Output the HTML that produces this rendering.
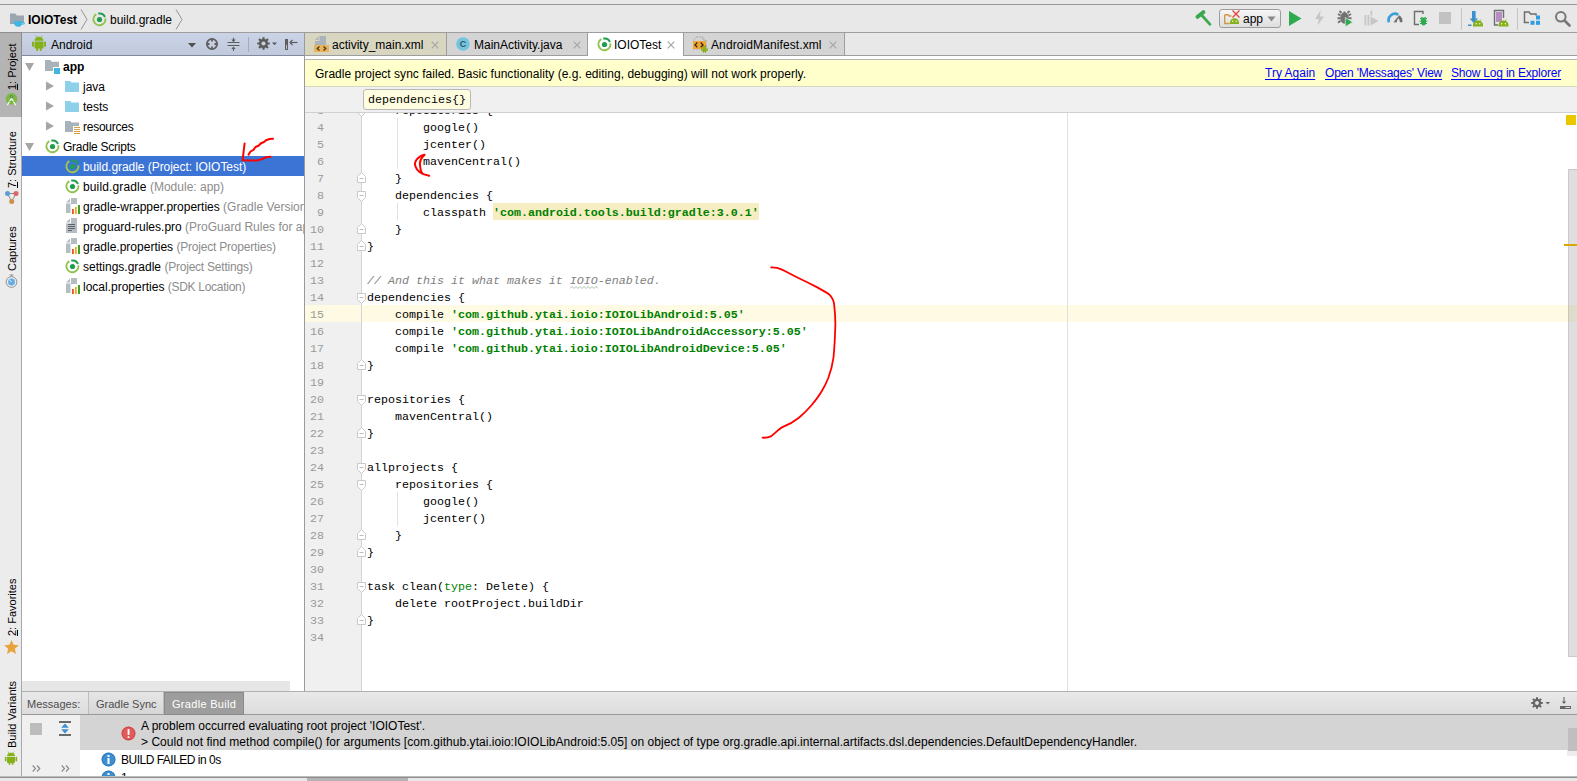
<!DOCTYPE html>
<html><head><meta charset="utf-8"><title>IOIOTest</title>
<style>
*{box-sizing:border-box}
html,body{margin:0;padding:0}
body{width:1577px;height:781px;overflow:hidden;position:relative;background:#ececec;font-family:"Liberation Sans",sans-serif;font-size:12px;color:#000}
.abs{position:absolute}
.t{position:absolute;white-space:nowrap;line-height:14px;height:14px}
.g{color:#8c8c8c}
/* nav */
#topstrip{left:0;top:0;width:1577px;height:4px;background:#e8e8e8}
#topline{left:0;top:4px;width:1577px;height:1px;background:#9a9a9a}
#nav{left:0;top:5px;width:1577px;height:27px;background:#e8e8e8}
#navline{left:0;top:32px;width:1577px;height:1px;background:#9d9d9d}
/* left strip */
#lstrip{left:0;top:33px;width:22px;height:748px;background:#ececec;border-right:1px solid #a8a8a8}
#lsel{left:0;top:32px;width:22px;height:85px;background:#b4b4b4;border-top:1px solid #8f8f8f;border-right:1px solid #8c8c8c}
.vt{position:absolute;white-space:nowrap;transform-origin:0 0;transform:rotate(-90deg);line-height:14px;height:14px;font-size:11px}
/* project panel */
#phead{left:22px;top:33px;width:283px;height:23px;background:linear-gradient(#cbd4e6,#c0c9dd);border-bottom:1px solid #808a9c}
#ptree{left:22px;top:56px;width:283px;height:635px;background:#fff}
#psel{left:22px;top:156px;width:283px;height:20px;background:#3b74d4}
#pdiv{left:304px;top:33px;width:1px;height:658px;background:#9a9a9a}
#phs{left:22px;top:681px;width:268px;height:10px;background:#e6e6e6}
.row{position:absolute;left:0;height:20px;white-space:nowrap;line-height:20px}
/* editor */
#tabs{left:305px;top:33px;width:1272px;height:23px;background:#e8e8e8;border-bottom:1px solid #9d9d9d}
.tab{position:absolute;top:33px;height:23px;border-right:1px solid #a0a0a0;border-bottom:1px solid #a8a8a8;background:#d3d3d3}
#tabgap{left:305px;top:56px;width:1272px;height:4px;background:#fff;border-bottom:1px solid #b4b4b4}
#banner{left:305px;top:60px;width:1272px;height:27px;background:#ffffcc;border-bottom:1px solid #d8d8c0}
#crumbs{left:305px;top:87px;width:1272px;height:26px;background:#f0f0f0;border-bottom:1px solid #d0d0d0}
#crumb{left:363px;top:89px;width:108px;height:21px;background:#fffde0;border:1px solid #b8b8b8;border-radius:3px}
#editor{left:305px;top:113px;width:1272px;height:578px;background:#fff;overflow:hidden}
#gutter{left:0;top:0;width:56px;height:578px;background:#f0f0f0}
#curline{left:0;top:192px;width:1272px;height:17px;background:#fffae3}
#margin{left:762px;top:0;width:1px;height:578px;background:#e0e0e0}
#vscroll{left:1262px;top:0;width:10px;height:578px;background:rgba(255,255,255,0)}
#vthumb{left:1263px;top:56px;width:9px;height:488px;background:rgba(150,150,150,.3);border:1px solid rgba(120,120,120,.2);border-right:0}
.ln{position:absolute;left:0px;width:19px;text-align:right;margin-top:2px;height:17px;line-height:17px;font-family:"Liberation Mono",monospace;font-size:11.67px;color:#999;white-space:pre}
.cl{position:absolute;left:62px;margin-top:2px;height:17px;line-height:17px;font-family:"Liberation Mono",monospace;font-size:11.67px;color:#000;white-space:pre}
.s{color:#008000;font-weight:bold}
.c{color:#808080;font-style:italic}
.hl{background:#f6edc3;padding:3px 0 0}
.fold{position:absolute;left:52px;width:9px;height:11px}
.na{color:#008000}
.typo{}
.ig{position:absolute;width:1px;background:#e2e2e2}
/* bottom */
#bhead{left:22px;top:691px;width:1555px;height:24px;background:linear-gradient(#e9e9e9,#dcdcdc);border-top:1px solid #b0b0b0;border-bottom:1px solid #9a9a9a}
#btab1{left:88px;top:692px;width:76px;height:22px;background:linear-gradient(#e6e6e6,#d6d6d6);border-left:1px solid #bdbdbd;border-right:1px solid #bdbdbd}
#btab2{left:164px;top:692px;width:80px;height:23px;background:#9d9d9d;border:1px solid #8a8a8a}
#bside{left:22px;top:715px;width:58px;height:61px;background:#f0f0f0}
#bmain{left:80px;top:715px;width:1497px;height:61px;background:#fff}
#bsel{left:80px;top:715px;width:1497px;height:35px;background:#d4d4d4}
#bfoot{left:0;top:776px;width:1577px;height:5px;background:#e8e8e8;border-top:1px solid #bdbdbd}
#bfoot2{left:0;top:777px;width:1577px;height:1px;background:#8e8e8e}
#bfoot3{left:307px;top:778px;width:101px;height:3px;background:#b4b4b4}
a.lk{color:#0000ff;text-decoration:underline;text-underline-offset:2px}
</style></head><body>
<div id="topstrip" class="abs"></div><div id="topline" class="abs"></div>
<div id="nav" class="abs"></div><div id="navline" class="abs"></div>
<svg class="abs" style="left:9px;top:12px" width="17" height="16" viewBox="0 0 17 16"><path d="M1 1.5h5.2l1.6 2H15v8.5H1z" fill="#9aa7b0"/><path d="M5 9h8.2v1.2c1.6-.3 2.6.2 2.6 1.200 0 1.100-1.300 1.600-3 1.300-.6 1.400-1.800 2-3.700 2S5.600 13.600 5 11.500z" fill="#40b6e0"/><path d="M13.200 11.200v1.200c.9.100 1.500-.100 1.500-.600s-.600-.700-1.500-.600z" fill="#e8e8e8"/></svg>
<div class="t" style="left:28px;top:13px;font-weight:bold">IOIOTest</div>
<svg class="abs" style="left:80px;top:9px" width="9" height="21" viewBox="0 0 9 21"><path d="M1 .5L7 10.500L1 20.500" fill="none" stroke="#949494" stroke-width="1"/></svg>
<svg class="abs gi" style="left:92px;top:12px" width="15" height="15" viewBox="0 0 15 15"><path d="M4.300 2.100A6 6 0 1 0 13.400 6.400" fill="none" stroke="#8fc24c" stroke-width="1.900"/><path d="M6.200 1.650A6 6 0 0 1 13 5" fill="none" stroke="#1e9e4e" stroke-width="1.900"/><circle cx="7.500" cy="7.500" r="2.600" fill="#1e9e4e"/></svg>
<div class="t" style="left:110px;top:13px">build.gradle</div>
<svg class="abs" style="left:175px;top:9px" width="9" height="21" viewBox="0 0 9 21"><path d="M1 .5L7 10.500L1 20.500" fill="none" stroke="#949494" stroke-width="1"/></svg>


<svg class="abs" style="left:1195px;top:10px" width="17" height="16" viewBox="0 0 17 16"><path d="M2.600 6.800L8.300 2.200" stroke="#3aa84c" stroke-width="4" stroke-linecap="round"/><path d="M7 5.500L15 14.300" stroke="#3aa84c" stroke-width="2.700" stroke-linecap="round"/></svg>
<div class="abs" style="left:1219px;top:9px;width:62px;height:19px;border:1px solid #9c9c9c;border-radius:3px;background:linear-gradient(#f6f6f6,#dedede)"></div>
<svg class="abs" style="left:1224px;top:10px" width="18" height="15" viewBox="0 0 18 15"><path d="M.7 4.700h3.300l1 1.300h2.500M.7 4.700v8.800h5" fill="none" stroke="#d09a4a" stroke-width="1.400"/><path d="M6 14V12.500A4.500 4.300 0 0 1 15 12.500V14z" fill="#84b019"/><circle cx="8.800" cy="11.300" r=".7" fill="#fff"/><circle cx="12.200" cy="11.300" r=".7" fill="#fff"/><path d="M8.500 .5L15.500 7.500M15.500 .5L8.500 7.500" stroke="#e0443e" stroke-width="1.300"/></svg>
<div class="t" style="left:1243px;top:12px">app</div>
<svg class="abs" style="left:1267px;top:16px" width="9" height="6" viewBox="0 0 9 6"><path d="M.5 .5H8.500L4.500 5.500Z" fill="#8a8a8a"/></svg>
<svg class="abs" style="left:1288px;top:10px" width="14" height="17" viewBox="0 0 14 17"><path d="M1 1V16L13.500 8.500Z" fill="#2eab4f"/></svg>
<svg class="abs" style="left:1314px;top:10px" width="11" height="16" viewBox="0 0 11 16"><path d="M6.500 .5L1 9h3.800L3.500 15.500L10 6.500H6z" fill="#c6c6c6"/></svg>
<svg class="abs" style="left:1337px;top:10px" width="17" height="17" viewBox="0 0 17 17"><ellipse cx="7.500" cy="8" rx="4.300" ry="5.800" fill="#727272"/><path d="M4.500 3L2.500 1M10.500 3L12.500 1M3.500 5.500L1 4M3.500 8.200H.5M3.500 10.800L1 12.800M11.500 5.500L14 4M11.500 8.200H14.500M7.500 1.500V3" stroke="#727272" stroke-width="1.900"/><path d="M8.300 7.500V16.800L15.800 12.150Z" fill="#2eab4f" stroke="#e8e8e8" stroke-width=".7"/></svg>
<svg class="abs" style="left:1364px;top:10px" width="15" height="16" viewBox="0 0 15 16"><rect x=".5" y="5" width="1.800" height="10.500" fill="#c6c6c6"/><rect x="3.500" y="5" width="1.800" height="10.500" fill="#c6c6c6"/><rect x="6.500" y=".5" width="1.800" height="5" fill="#c6c6c6"/><path d="M6.500 6.500V15.500L14.500 11Z" fill="#c6c6c6"/></svg>
<svg class="abs" style="left:1387px;top:12px" width="16" height="11" viewBox="0 0 16 11"><path d="M2 10.300A6.300 6.300 0 0 1 11.300 2.800" fill="none" stroke="#3aa0d8" stroke-width="2.700"/><path d="M12.300 3.300A7 7 0 0 1 15.300 10.300h-2.500A4.500 4.500 0 0 0 10.800 6z" fill="#6e6e6e"/><path d="M6.500 10.300L12 3.300L9.500 10.600z" fill="#6e6e6e"/></svg>
<svg class="abs" style="left:1413px;top:10px" width="16" height="17" viewBox="0 0 16 17"><path d="M10 4V1.500H1.500V14.500H6" fill="none" stroke="#6e6e6e" stroke-width="1.400"/><ellipse cx="10.500" cy="11.500" rx="2.600" ry="4" fill="#2eab4f"/><path d="M7 8.500h7M6.500 11h8M7 13.500h7M8.500 7l1 1.500M12.500 7l-1 1.500" stroke="#2eab4f" stroke-width="1.100"/></svg>
<div class="abs" style="left:1439px;top:12px;width:12px;height:12px;background:#c2c2c2"></div>
<div class="abs" style="left:1461px;top:8px;width:1px;height:22px;background:#c4c4c4"></div>
<svg class="abs" style="left:1468px;top:10px" width="16" height="17" viewBox="0 0 16 17"><rect x="4" y="1" width="3.600" height="8" fill="#3a8fd0"/><path d="M1.500 8.500h8.600L5.800 13z" fill="#3a8fd0"/><rect x="0" y="14.500" width="3.500" height="1.500" fill="#3a8fd0"/><path d="M5 16.500V15A5 4.600 0 0 1 15 15v1.500z" fill="#84b019"/><path d="M7 9.500l1.200 1.600M13 9.500l-1.200 1.600" stroke="#84b019" stroke-width=".8"/><circle cx="8.200" cy="13.700" r=".7" fill="#fff"/><circle cx="11.800" cy="13.700" r=".7" fill="#fff"/></svg>
<svg class="abs" style="left:1493px;top:9px" width="17" height="18" viewBox="0 0 17 18"><path d="M10.500 9V1.500H1.500V16H5" fill="none" stroke="#6e6e6e" stroke-width="1.400"/><rect x="3" y="3" width="6" height="10" fill="#b78cc8"/><path d="M5.500 17.500V16A5 4.600 0 0 1 15.500 16v1.500z" fill="#84b019"/><path d="M7.500 10.500l1.200 1.600M13.500 10.500l-1.200 1.600" stroke="#84b019" stroke-width=".8"/><circle cx="8.700" cy="14.700" r=".7" fill="#fff"/><circle cx="12.300" cy="14.700" r=".7" fill="#fff"/></svg>
<div class="abs" style="left:1517px;top:8px;width:1px;height:22px;background:#c4c4c4"></div>
<svg class="abs" style="left:1523px;top:11px" width="18" height="15" viewBox="0 0 18 15"><path d="M13 4.500V3H7.500L6 1H1.500V11.500H6" fill="none" stroke="#6e6e6e" stroke-width="1.500"/><rect x="13" y="4.500" width="4" height="4" fill="#2f9be0"/><rect x="13" y="9.800" width="4" height="4" fill="#2f9be0"/><rect x="7.500" y="9.800" width="4" height="4" fill="#2f9be0"/></svg>
<svg class="abs" style="left:1554px;top:10px" width="17" height="17" viewBox="0 0 17 17"><circle cx="6.800" cy="6.800" r="4.800" fill="none" stroke="#787878" stroke-width="2"/><path d="M10.500 10.500L15.500 15.500" stroke="#787878" stroke-width="2.600" stroke-linecap="round"/></svg>
<div id="lstrip" class="abs"></div><div id="lsel" class="abs"></div>
<div class="vt" style="left:5px;top:90px"><u>1</u>: Project</div>
<svg class="abs" style="left:4px;top:91px" width="15" height="16" viewBox="0 0 15 16"><circle cx="7.500" cy="7.800" r="5.800" fill="#7cb944"/><circle cx="7.500" cy="5.800" r="1.300" fill="none" stroke="#6e7a6a" stroke-width="1"/><path d="M7.500 7.300L3.300 14.200M7.500 7.300L11.700 14.200" fill="none" stroke="#f2f2f2" stroke-width="1.300"/><path d="M5.300 10.600H9.700" stroke="#7cb944" stroke-width="1"/></svg>
<div class="vt" style="left:5px;top:188px"><u>7</u>: Structure</div>
<svg class="abs" style="left:4px;top:190px" width="16" height="16" viewBox="0 0 16 16"><path d="M3.500 3.500H12L7.700 11.500z" fill="none" stroke="#8a8a8a" stroke-width="1"/><circle cx="3.500" cy="3.500" r="2.500" fill="#5a9fd8"/><circle cx="12" cy="3.500" r="2.500" fill="#e06464"/><circle cx="7.700" cy="11.500" r="2.500" fill="#cc8f4e"/></svg>
<div class="vt" style="left:5px;top:271px">Captures</div>
<svg class="abs" style="left:4px;top:274px" width="15" height="15" viewBox="0 0 15 15"><circle cx="7.500" cy="8" r="5.400" fill="#e4e9ee" stroke="#969696" stroke-width="1"/><circle cx="7.500" cy="8" r="3.400" fill="#62aee4"/><path d="M7.500 8L5.300 5.500" stroke="#eef" stroke-width="1"/><path d="M7.500 .5V2.500M5.500 1h4" stroke="#969696" stroke-width="1"/></svg>
<div class="vt" style="left:5px;top:636px"><u>2</u>: Favorites</div>
<svg class="abs" style="left:4px;top:640px" width="15" height="14" viewBox="0 0 15 14"><path d="M7.500 0L9.600 4.800L14.800 5.300L10.900 8.800L12 13.900L7.500 11.200L3 13.900L4.100 8.800L.2 5.300L5.400 4.800Z" fill="#e8a33d"/></svg>
<div class="vt" style="left:5px;top:748px">Build Variants</div>
<svg class="abs" style="left:4px;top:751px" width="14" height="15" viewBox="0 0 16 17" fill="#84b019" color="#84b019"><path d="M3.500 6.500h9v6.300a.8.800 0 0 1-.8.800H4.300a.8.800 0 0 1-.8-.8z"/><path d="M3.500 5.700a4.500 3.900 0 0 1 9 0z"/><rect x="1" y="6.500" width="1.900" height="5.300" rx=".9"/><rect x="13.100" y="6.500" width="1.900" height="5.300" rx=".9"/><rect x="5.300" y="12" width="1.900" height="4" rx=".9"/><rect x="8.800" y="12" width="1.900" height="4" rx=".9"/><path d="M4.700.6l1.200 1.900M11.300.6l-1.200 1.900" stroke-width=".8" stroke="currentColor"/></svg>
<div id="phead" class="abs"></div><div id="ptree" class="abs"></div><div id="psel" class="abs"></div><div id="phs" class="abs"></div>
<div class="abs" style="left:22px;top:33px;width:282px;height:658px;overflow:hidden"><div class="abs" style="left:-22px;top:-33px"><svg class="abs" style="left:31px;top:35px;color:#84b019" width="16" height="17" viewBox="0 0 16 17" fill="#84b019"><path d="M3.500 6.500h9v6.300a.8.800 0 0 1-.8.800H4.300a.8.800 0 0 1-.8-.8z"/><path d="M3.500 5.700a4.500 3.900 0 0 1 9 0z"/><rect x="1" y="6.500" width="1.900" height="5.300" rx=".9"/><rect x="13.100" y="6.500" width="1.900" height="5.300" rx=".9"/><rect x="5.300" y="12" width="1.900" height="4" rx=".9"/><rect x="8.800" y="12" width="1.900" height="4" rx=".9"/><path d="M4.700.6l1.200 1.900M11.300.6l-1.200 1.900" stroke-width=".8" stroke="currentColor"/></svg>
<div class="t" style="left:51px;top:38px">Android</div>
<svg class="abs" style="left:188px;top:43px" width="8" height="5" viewBox="0 0 8 5"><path d="M0 0H8L4 4.500Z" fill="#505050"/></svg>
<svg class="abs" style="left:205px;top:37px" width="14" height="14" viewBox="0 0 14 14"><circle cx="7" cy="7" r="5.100" fill="none" stroke="#5e5e5e" stroke-width="1.800"/><path d="M7 1.500v3M7 9.500v3M1.500 7h3M9.500 7h3" stroke="#5e5e5e" stroke-width="1.800"/></svg>
<svg class="abs" style="left:227px;top:37px" width="13" height="15" viewBox="0 0 13 15"><path d="M.5 5.500H12.500M.5 8.500H12.500" stroke="#5e5e5e" stroke-width="1"/><path d="M6.500 .8V4M6.500 14V10.700" stroke="#5e5e5e" stroke-width="1.100"/><path d="M4.300 2.600H8.700L6.500 5.200zM4.300 12.100H8.700L6.500 9.500z" fill="#5e5e5e"/></svg>
<div class="abs" style="left:248px;top:37px;width:1px;height:15px;background:#a3acbd"></div>
<svg class="abs" style="left:256.500px;top:37.300px" width="22" height="13" viewBox="0 0 22 13"><g transform="translate(6.500 6.500)"><circle r="3.300" fill="none" stroke="#5a5a5a" stroke-width="2.400"/><g stroke="#5a5a5a" stroke-width="2.200"><path d="M0-6.300V-3.500M0 6.300V3.500M-6.300 0H-3.500M6.300 0H3.500M-4.450-4.450L-2.600-2.600M4.450 4.450L2.600 2.600M-4.450 4.450L-2.600 2.600M4.450-4.450L2.600-2.600"/></g></g><path d="M15 5.500h5l-2.500 2.700z" fill="#5a5a5a"/></svg>
<svg class="abs" style="left:285px;top:38px" width="13" height="13" viewBox="0 0 13 13"><rect x="0" y="1" width="3" height="11" fill="#5e5e5e"/><rect x="1" y="7" width="1" height="4" fill="#b8c0d0"/><path d="M5 4.500H12.500" stroke="#5e5e5e" stroke-width="1.200"/><path d="M7.500 2L5 4.500L7.500 7" fill="none" stroke="#5e5e5e" stroke-width="1.200"/></svg>
<svg class="abs" style="left:25px;top:63px" width="9" height="8" viewBox="0 0 9 8"><path d="M0 0H9L4.500 8Z" fill="#a6a6a6"/></svg>
<svg class="abs" style="left:45px;top:60px" width="16" height="15" viewBox="0 0 16 15"><path d="M0 0h5.300l1.400 1.800H14v9.200H0z" fill="#a8b2ba"/><rect x="8" y="7" width="7" height="7" fill="#fff"/><rect x="9" y="8" width="6" height="6" fill="#40b6e0"/></svg>
<div class="t" style="left:63px;top:60px;font-weight:bold">app</div>
<svg class="abs" style="left:46px;top:81px" width="8" height="10" viewBox="0 0 8 10"><path d="M0 .5V9.500L8 5Z" fill="#a6a6a6"/></svg>
<svg class="abs" style="left:65px;top:81px" width="14" height="11" viewBox="0 0 14 11"><path d="M0 0h5.200l1.400 1.600H14V11H0z" fill="#8ed0ea"/></svg>
<div class="t" style="left:83px;top:80px;">java</div>
<svg class="abs" style="left:46px;top:101px" width="8" height="10" viewBox="0 0 8 10"><path d="M0 .5V9.500L8 5Z" fill="#a6a6a6"/></svg>
<svg class="abs" style="left:65px;top:101px" width="14" height="11" viewBox="0 0 14 11"><path d="M0 0h5.200l1.400 1.600H14V11H0z" fill="#8ed0ea"/></svg>
<div class="t" style="left:83px;top:100px;">tests</div>
<svg class="abs" style="left:46px;top:121px" width="8" height="10" viewBox="0 0 8 10"><path d="M0 .5V9.500L8 5Z" fill="#a6a6a6"/></svg>
<svg class="abs" style="left:65px;top:121px" width="16" height="15" viewBox="0 0 16 15"><path d="M0 0h5.200l1.400 1.600H14V11H0z" fill="#a8b2ba"/><rect x="8" y="5" width="8" height="10" fill="#fff"/><path d="M9 6.500h6M9 8.500h6M9 10.500h6M9 12.500h6" stroke="#dba040" stroke-width="1"/></svg>
<div class="t" style="left:83px;top:120px;letter-spacing:-.25px">resources</div>
<svg class="abs" style="left:25px;top:143px" width="9" height="8" viewBox="0 0 9 8"><path d="M0 0H9L4.500 8Z" fill="#a6a6a6"/></svg>
<svg class="abs" style="left:45px;top:139px" width="15" height="15" viewBox="0 0 15 15"><path d="M4.300 2.100A6 6 0 1 0 13.400 6.400" fill="none" stroke="#8fc24c" stroke-width="1.900"/><path d="M6.200 1.650A6 6 0 0 1 13 5" fill="none" stroke="#1e9e4e" stroke-width="1.900"/><circle cx="7.500" cy="7.500" r="2.600" fill="#1e9e4e"/></svg>
<div class="t" style="left:63px;top:140px;letter-spacing:-.25px">Gradle Scripts</div>
<svg class="abs" style="left:65px;top:159px" width="15" height="15" viewBox="0 0 15 15"><path d="M4.300 2.100A6 6 0 1 0 13.400 6.400" fill="none" stroke="#a5c846" stroke-width="1.900"/><path d="M6.200 1.650A6 6 0 0 1 13 5" fill="none" stroke="#22a04e" stroke-width="1.900"/><circle cx="7.500" cy="7.500" r="2.600" fill="#22a04e"/></svg>
<div class="t" style="left:83px;top:160px;color:#fff;letter-spacing:-.05px">build.gradle (Project: IOIOTest)</div>
<svg class="abs" style="left:65px;top:179px" width="15" height="15" viewBox="0 0 15 15"><path d="M4.300 2.100A6 6 0 1 0 13.400 6.400" fill="none" stroke="#8fc24c" stroke-width="1.900"/><path d="M6.200 1.650A6 6 0 0 1 13 5" fill="none" stroke="#1e9e4e" stroke-width="1.900"/><circle cx="7.500" cy="7.500" r="2.600" fill="#1e9e4e"/></svg>
<div class="t" style="left:83px;top:180px;"><span style="letter-spacing:.13px">build.gradle</span> <span class="g">(Module: app)</span></div>
<svg class="abs" style="left:64px;top:198px" width="17" height="17" viewBox="0 0 17 17"><path d="M2 4.500L6 .5V4.500z" fill="#b5bcc2"/><path d="M7 0H13V15H2V5.500H7z" fill="#b5bcc2"/><rect x="6.500" y="6" width="10.500" height="11" fill="#fff"/><rect x="8" y="11" width="1.800" height="5" fill="#e8541e"/><rect x="11" y="9" width="1.800" height="7" fill="#f5a623"/><rect x="14" y="7" width="2" height="9" fill="#3fa02c"/></svg>
<div class="t" style="left:83px;top:200px;">gradle-wrapper.properties <span class="g">(Gradle Version)</span></div>
<svg class="abs" style="left:64px;top:218px" width="17" height="17" viewBox="0 0 17 17"><path d="M2 4.500L6 .5V4.500z" fill="#b5bcc2"/><path d="M7 0H13V15H2V5.500H7z" fill="#b5bcc2"/><path d="M4 6.500h7M4 8.500h7M4 10.500h7M4 12.500h4" stroke="#5e6266" stroke-width="1"/></svg>
<div class="t" style="left:83px;top:220px;">proguard-rules.pro <span class="g">(ProGuard Rules for app)</span></div>
<svg class="abs" style="left:64px;top:238px" width="17" height="17" viewBox="0 0 17 17"><path d="M2 4.500L6 .5V4.500z" fill="#b5bcc2"/><path d="M7 0H13V15H2V5.500H7z" fill="#b5bcc2"/><rect x="6.500" y="6" width="10.500" height="11" fill="#fff"/><rect x="8" y="11" width="1.800" height="5" fill="#e8541e"/><rect x="11" y="9" width="1.800" height="7" fill="#f5a623"/><rect x="14" y="7" width="2" height="9" fill="#3fa02c"/></svg>
<div class="t" style="left:83px;top:240px;">gradle.properties <span class="g" style="letter-spacing:-.2px">(Project Properties)</span></div>
<svg class="abs" style="left:65px;top:259px" width="15" height="15" viewBox="0 0 15 15"><path d="M4.300 2.100A6 6 0 1 0 13.400 6.400" fill="none" stroke="#8fc24c" stroke-width="1.900"/><path d="M6.200 1.650A6 6 0 0 1 13 5" fill="none" stroke="#1e9e4e" stroke-width="1.900"/><circle cx="7.500" cy="7.500" r="2.600" fill="#1e9e4e"/></svg>
<div class="t" style="left:83px;top:260px;">settings.gradle <span class="g" style="letter-spacing:-.22px">(Project Settings)</span></div>
<svg class="abs" style="left:64px;top:278px" width="17" height="17" viewBox="0 0 17 17"><path d="M2 4.500L6 .5V4.500z" fill="#b5bcc2"/><path d="M7 0H13V15H2V5.500H7z" fill="#b5bcc2"/><rect x="6.500" y="6" width="10.500" height="11" fill="#fff"/><rect x="8" y="11" width="1.800" height="5" fill="#e8541e"/><rect x="11" y="9" width="1.800" height="7" fill="#f5a623"/><rect x="14" y="7" width="2" height="9" fill="#3fa02c"/></svg>
<div class="t" style="left:83px;top:280px;">local.properties <span class="g" style="letter-spacing:-.28px">(SDK Location)</span></div></div></div>
<div id="tabs" class="abs"></div>
<div class="abs" style="left:305px;top:32px;width:142px;height:24px;background:#d8d6c1;border-top:1px solid #9d9d9d;border-right:1px solid #9d9d9d;border-bottom:1px solid #9d9d9d"></div>
<div class="abs" style="left:447px;top:32px;width:141px;height:24px;background:#d4d4d4;border-top:1px solid #9d9d9d;border-right:1px solid #9d9d9d;border-bottom:1px solid #9d9d9d"></div>
<div class="abs" style="left:588px;top:32px;width:96px;height:28px;background:#fff;border-top:1px solid #9d9d9d;border-right:1px solid #9d9d9d"></div>
<div class="abs" style="left:684px;top:32px;width:161px;height:24px;background:#d4d4d4;border-top:1px solid #9d9d9d;border-right:1px solid #9d9d9d;border-bottom:1px solid #9d9d9d"></div>
<svg class="abs" style="left:314px;top:36px" width="15" height="16" viewBox="0 0 15 16"><path d="M1 4L4.500 .5V4z" fill="#aab4bb"/><path d="M5.500 0H12V9H1V5H5.500z" fill="#aab4bb"/><rect x="0" y="9" width="15" height="7" fill="#eab35c"/><path d="M5.500 10.500L3.200 12.500l2.300 2M9.500 10.500l2.300 2-2.300 2" fill="none" stroke="#4a3a1a" stroke-width="1.300"/></svg>
<div class="t" style="left:332px;top:38px">activity_main.xml</div>
<svg class="abs" style="left:431px;top:41px" width="8" height="8" viewBox="0 0 8 8"><path d="M.7 .7L7.300 7.300M7.300 .7L.7 7.300" stroke="#a6a6a6" stroke-width="1.200"/></svg>
<svg class="abs" style="left:456px;top:37px" width="14" height="14" viewBox="0 0 14 14"><circle cx="7" cy="7" r="6.800" fill="#73c4de"/><text x="7" y="10" font-family="Liberation Sans,sans-serif" font-size="9" font-weight="bold" text-anchor="middle" fill="#3a5560">C</text></svg>
<div class="t" style="left:474px;top:38px">MainActivity.java</div>
<svg class="abs" style="left:573px;top:41px" width="8" height="8" viewBox="0 0 8 8"><path d="M.7 .7L7.300 7.300M7.300 .7L.7 7.300" stroke="#a6a6a6" stroke-width="1.200"/></svg>
<svg class="abs" style="left:597px;top:37px" width="15" height="15" viewBox="0 0 15 15"><path d="M4.300 2.100A6 6 0 1 0 13.400 6.400" fill="none" stroke="#8fc24c" stroke-width="1.900"/><path d="M6.200 1.650A6 6 0 0 1 13 5" fill="none" stroke="#1e9e4e" stroke-width="1.900"/><circle cx="7.500" cy="7.500" r="2.600" fill="#1e9e4e"/></svg>
<div class="t" style="left:614px;top:38px">IOIOTest</div>
<svg class="abs" style="left:667px;top:41px" width="8" height="8" viewBox="0 0 8 8"><path d="M.7 .7L7.300 7.300M7.300 .7L.7 7.300" stroke="#a6a6a6" stroke-width="1.200"/></svg>
<svg class="abs" style="left:692px;top:36px" width="17" height="17" viewBox="0 0 17 17"><path d="M4.500 1H11l0 3h3v9H1.500V4z" fill="none" stroke="#9aa0a5" stroke-width="1" stroke-dasharray="1.500 1"/><rect x="1" y="5" width="13" height="8" fill="#f0a535"/><path d="M5.300 6.500L3 9l2.300 2.300M8.700 6.500L11 9l-2.300 2.300" fill="none" stroke="#3c2a10" stroke-width="1.300"/><g transform="translate(8.500 9) scale(.5)" fill="#84b019"><path d="M3.500 6.500h9v6.300a.8.800 0 0 1-.8.800H4.300a.8.800 0 0 1-.8-.8z"/><path d="M3.500 5.700a4.500 3.900 0 0 1 9 0z"/><rect x="1" y="6.500" width="1.900" height="5.300" rx=".9"/><rect x="13.100" y="6.500" width="1.900" height="5.300" rx=".9"/><rect x="5.300" y="12" width="1.900" height="4" rx=".9"/><rect x="8.800" y="12" width="1.900" height="4" rx=".9"/><path d="M4.700.6l1.200 1.900M11.300.6l-1.200 1.900" stroke-width=".8" stroke="currentColor"/></g></svg>
<div class="t" style="left:711px;top:38px;letter-spacing:.1px">AndroidManifest.xml</div>
<svg class="abs" style="left:829px;top:41px" width="8" height="8" viewBox="0 0 8 8"><path d="M.7 .7L7.300 7.300M7.300 .7L.7 7.300" stroke="#a6a6a6" stroke-width="1.200"/></svg>
<div id="tabgap" class="abs"></div>
<div id="banner" class="abs"></div>
<div class="t" style="left:315px;top:67px;letter-spacing:.025px">Gradle project sync failed. Basic functionality (e.g. editing, debugging) will not work properly.</div>
<div class="t" style="left:1265px;top:66px"><a class="lk">Try Again</a></div>
<div class="t" style="left:1325px;top:66px;letter-spacing:-.2px"><a class="lk">Open 'Messages' View</a></div>
<div class="t" style="left:1451px;top:66px;letter-spacing:-.2px"><a class="lk">Show Log in Explorer</a></div>
<div id="crumbs" class="abs"></div><div id="crumb" class="abs"></div>
<div class="abs" style="left:368px;top:93px;height:14px;line-height:14px;font-family:'Liberation Mono',monospace;font-size:11.67px;white-space:pre">dependencies{}</div>
<div id="editor" class="abs">
<div id="gutter" class="abs"></div>
<div id="curline" class="abs"></div>
<div class="abs" style="left:56px;top:0;width:1px;height:578px;background:#d4d4d4"></div>
<div id="margin" class="abs"></div>
<div class='ln' style='top:-12px'>3</div>
<div class='cl' style='top:-12px'>    repositories {</div>
<div class='ln' style='top:5px'>4</div>
<div class='cl' style='top:5px'>        google()</div>
<div class='ln' style='top:22px'>5</div>
<div class='cl' style='top:22px'>        jcenter()</div>
<div class='ln' style='top:39px'>6</div>
<div class='cl' style='top:39px'>        mavenCentral()</div>
<div class='ln' style='top:56px'>7</div>
<div class='cl' style='top:56px'>    }</div>
<div class='ln' style='top:73px'>8</div>
<div class='cl' style='top:73px'>    dependencies {</div>
<div class='ln' style='top:90px'>9</div>
<div class='cl' style='top:90px'>        classpath <span class='s hl'>'com.android.tools.build:gradle:3.0.1'</span></div>
<div class='ln' style='top:107px'>10</div>
<div class='cl' style='top:107px'>    }</div>
<div class='ln' style='top:124px'>11</div>
<div class='cl' style='top:124px'>}</div>
<div class='ln' style='top:141px'>12</div>
<div class='ln' style='top:158px'>13</div>
<div class='cl' style='top:158px'><span class='c'>// And this it what makes it <span class='typo'>IOIO</span>-enabled.</span></div>
<div class='ln' style='top:175px'>14</div>
<div class='cl' style='top:175px'>dependencies {</div>
<div class='ln' style='top:192px'>15</div>
<div class='cl' style='top:192px'>    compile <span class='s'>'com.github.ytai.ioio:IOIOLibAndroid:5.05'</span></div>
<div class='ln' style='top:209px'>16</div>
<div class='cl' style='top:209px'>    compile <span class='s'>'com.github.ytai.ioio:IOIOLibAndroidAccessory:5.05'</span></div>
<div class='ln' style='top:226px'>17</div>
<div class='cl' style='top:226px'>    compile <span class='s'>'com.github.ytai.ioio:IOIOLibAndroidDevice:5.05'</span></div>
<div class='ln' style='top:243px'>18</div>
<div class='cl' style='top:243px'>}</div>
<div class='ln' style='top:260px'>19</div>
<div class='ln' style='top:277px'>20</div>
<div class='cl' style='top:277px'>repositories {</div>
<div class='ln' style='top:294px'>21</div>
<div class='cl' style='top:294px'>    mavenCentral()</div>
<div class='ln' style='top:311px'>22</div>
<div class='cl' style='top:311px'>}</div>
<div class='ln' style='top:328px'>23</div>
<div class='ln' style='top:345px'>24</div>
<div class='cl' style='top:345px'>allprojects {</div>
<div class='ln' style='top:362px'>25</div>
<div class='cl' style='top:362px'>    repositories {</div>
<div class='ln' style='top:379px'>26</div>
<div class='cl' style='top:379px'>        google()</div>
<div class='ln' style='top:396px'>27</div>
<div class='cl' style='top:396px'>        jcenter()</div>
<div class='ln' style='top:413px'>28</div>
<div class='cl' style='top:413px'>    }</div>
<div class='ln' style='top:430px'>29</div>
<div class='cl' style='top:430px'>}</div>
<div class='ln' style='top:447px'>30</div>
<div class='ln' style='top:464px'>31</div>
<div class='cl' style='top:464px'>task clean(<span class='na'>type</span>: Delete) {</div>
<div class='ln' style='top:481px'>32</div>
<div class='cl' style='top:481px'>    delete rootProject.buildDir</div>
<div class='ln' style='top:498px'>33</div>
<div class='cl' style='top:498px'>}</div>
<div class='ln' style='top:515px'>34</div>
<svg class='fold' style='top:-7px' viewBox='0 0 9 11'><path d='M0.5 0.5H8.5V6.5L4.5 10.5L0.5 6.5Z' fill='#fff' stroke='#c9c9c9'/><path d='M2.5 4.5H6.5' stroke='#bdbdbd'/></svg>
<svg class='fold' style='top:78px' viewBox='0 0 9 11'><path d='M0.5 0.5H8.5V6.5L4.5 10.5L0.5 6.5Z' fill='#fff' stroke='#c9c9c9'/><path d='M2.5 4.5H6.5' stroke='#bdbdbd'/></svg>
<svg class='fold' style='top:180px' viewBox='0 0 9 11'><path d='M0.5 0.5H8.5V6.5L4.5 10.5L0.5 6.5Z' fill='#fff' stroke='#c9c9c9'/><path d='M2.5 4.5H6.5' stroke='#bdbdbd'/></svg>
<svg class='fold' style='top:282px' viewBox='0 0 9 11'><path d='M0.5 0.5H8.5V6.5L4.5 10.5L0.5 6.5Z' fill='#fff' stroke='#c9c9c9'/><path d='M2.5 4.5H6.5' stroke='#bdbdbd'/></svg>
<svg class='fold' style='top:350px' viewBox='0 0 9 11'><path d='M0.5 0.5H8.5V6.5L4.5 10.5L0.5 6.5Z' fill='#fff' stroke='#c9c9c9'/><path d='M2.5 4.5H6.5' stroke='#bdbdbd'/></svg>
<svg class='fold' style='top:367px' viewBox='0 0 9 11'><path d='M0.5 0.5H8.5V6.5L4.5 10.5L0.5 6.5Z' fill='#fff' stroke='#c9c9c9'/><path d='M2.5 4.5H6.5' stroke='#bdbdbd'/></svg>
<svg class='fold' style='top:469px' viewBox='0 0 9 11'><path d='M0.5 0.5H8.5V6.5L4.5 10.5L0.5 6.5Z' fill='#fff' stroke='#c9c9c9'/><path d='M2.5 4.5H6.5' stroke='#bdbdbd'/></svg>
<svg class='fold' style='top:59px' viewBox='0 0 9 11'><path d='M0.5 10.5H8.5V4.5L4.5 0.5L0.5 4.5Z' fill='#fff' stroke='#c9c9c9'/><path d='M2.5 6.5H6.5' stroke='#bdbdbd'/></svg>
<svg class='fold' style='top:110px' viewBox='0 0 9 11'><path d='M0.5 10.5H8.5V4.5L4.5 0.5L0.5 4.5Z' fill='#fff' stroke='#c9c9c9'/><path d='M2.5 6.5H6.5' stroke='#bdbdbd'/></svg>
<svg class='fold' style='top:127px' viewBox='0 0 9 11'><path d='M0.5 10.5H8.5V4.5L4.5 0.5L0.5 4.5Z' fill='#fff' stroke='#c9c9c9'/><path d='M2.5 6.5H6.5' stroke='#bdbdbd'/></svg>
<svg class='fold' style='top:246px' viewBox='0 0 9 11'><path d='M0.5 10.5H8.5V4.5L4.5 0.5L0.5 4.5Z' fill='#fff' stroke='#c9c9c9'/><path d='M2.5 6.5H6.5' stroke='#bdbdbd'/></svg>
<svg class='fold' style='top:314px' viewBox='0 0 9 11'><path d='M0.5 10.5H8.5V4.5L4.5 0.5L0.5 4.5Z' fill='#fff' stroke='#c9c9c9'/><path d='M2.5 6.5H6.5' stroke='#bdbdbd'/></svg>
<svg class='fold' style='top:416px' viewBox='0 0 9 11'><path d='M0.5 10.5H8.5V4.5L4.5 0.5L0.5 4.5Z' fill='#fff' stroke='#c9c9c9'/><path d='M2.5 6.5H6.5' stroke='#bdbdbd'/></svg>
<svg class='fold' style='top:433px' viewBox='0 0 9 11'><path d='M0.5 10.5H8.5V4.5L4.5 0.5L0.5 4.5Z' fill='#fff' stroke='#c9c9c9'/><path d='M2.5 6.5H6.5' stroke='#bdbdbd'/></svg>
<svg class='fold' style='top:501px' viewBox='0 0 9 11'><path d='M0.5 10.5H8.5V4.5L4.5 0.5L0.5 4.5Z' fill='#fff' stroke='#c9c9c9'/><path d='M2.5 6.5H6.5' stroke='#bdbdbd'/></svg>
<div class='ig' style='left:92px;top:5px;height:51px'></div>
<div class='ig' style='left:92px;top:90px;height:17px'></div>
<div class='ig' style='left:92px;top:379px;height:34px'></div>
<svg class='abs' style='left:265px;top:173px' width='28' height='3' viewBox='0 0 28 3'><polyline points='0,2.5 2,0.5 4,2.5 6,0.5 8,2.5 10,0.5 12,2.5 14,0.5 16,2.5 18,0.5 20,2.5 22,0.5 24,2.5 26,0.5 28,2.5' fill='none' stroke='#a3bfa3' stroke-width='.9'/></svg>
<div id="vthumb" class="abs"></div>
<div class="abs" style="left:1261px;top:2px;width:10px;height:10px;background:#ebc700"></div>
<div class="abs" style="left:1259px;top:131px;width:13px;height:2px;background:#dba700"></div>
</div>
<div id="pdiv" class="abs"></div>
<div id="bhead" class="abs"></div><div id="btab1" class="abs"></div><div id="btab2" class="abs"></div>
<div id="bside" class="abs"></div><div id="bmain" class="abs"></div><div id="bsel" class="abs"></div>
<div class="t" style="left:27px;top:697px;font-size:11px;color:#4d4d4d">Messages:</div>
<div class="t" style="left:96px;top:697px;font-size:11px;color:#4d4d4d">Gradle Sync</div>
<div class="t" style="left:172px;top:697px;font-size:11px;letter-spacing:.3px;color:#fff">Gradle Build</div>
<svg class="abs" style="left:1531px;top:697px" width="22" height="13" viewBox="0 0 22 13"><g transform="translate(6 6) scale(.92)"><circle r="3.300" fill="none" stroke="#666" stroke-width="2.400"/><g stroke="#666" stroke-width="2.200"><path d="M0-6.300V-3.500M0 6.300V3.500M-6.300 0H-3.500M6.300 0H3.500M-4.450-4.450L-2.600-2.600M4.450 4.450L2.600 2.600M-4.450 4.450L-2.600 2.600M4.450-4.450L2.600-2.600"/></g></g><path d="M14.500 5h4.500l-2.250 2.500z" fill="#666"/></svg>
<svg class="abs" style="left:1559px;top:697px" width="13" height="13" viewBox="0 0 13 13"><path d="M5 0V6" stroke="#666" stroke-width="1.100"/><path d="M2.800 4.500L5 7L7.200 4.500z" fill="#666"/><rect x="1" y="9" width="11" height="3" fill="#666"/><rect x="6.500" y="10" width="4.500" height="1" fill="#e0e0e0"/></svg>
<div class="abs" style="left:30px;top:723px;width:12px;height:12px;background:#bcbcbc"></div>
<svg class="abs" style="left:59px;top:721px" width="12" height="15" viewBox="0 0 12 15"><path d="M0 1H12M0 14H12" stroke="#6a6a6a" stroke-width="1.800"/><path d="M6 2.500L9.800 6.800H2.200zM6 12.500L9.800 8.200H2.200z" fill="#3f8fd0"/></svg>
<svg class="abs" style="left:32px;top:765px" width="9" height="7" viewBox="0 0 9 7"><path d="M.7 .5L3.500 3.500L.7 6.500M5 .5L7.800 3.500L5 6.500" fill="none" stroke="#888" stroke-width="1.100"/></svg>
<svg class="abs" style="left:61px;top:765px" width="9" height="7" viewBox="0 0 9 7"><path d="M.7 .5L3.500 3.500L.7 6.500M5 .5L7.800 3.500L5 6.500" fill="none" stroke="#888" stroke-width="1.100"/></svg>
<svg class="abs" style="left:121px;top:726px" width="15" height="15" viewBox="0 0 15 15"><circle cx="7.500" cy="7.500" r="7" fill="#e25b5b"/><circle cx="7.500" cy="7.500" r="6.300" fill="none" stroke="#c94040" stroke-width=".8"/><rect x="6.600" y="3" width="1.900" height="6" rx=".7" fill="#fff"/><rect x="6.600" y="10.200" width="1.900" height="1.900" rx=".7" fill="#fff"/></svg>
<div class="t" style="left:141px;top:719px">A problem occurred evaluating root project 'IOIOTest'.</div>
<div class="t" style="left:141px;top:735px;letter-spacing:.035px">&gt; Could not find method compile() for arguments [com.github.ytai.ioio:IOIOLibAndroid:5.05] on object of type org.gradle.api.internal.artifacts.dsl.dependencies.DefaultDependencyHandler.</div>
<svg class="abs" style="left:101px;top:752px" width="15" height="15" viewBox="0 0 15 15"><circle cx="7.500" cy="7.500" r="7" fill="#3d8fd1"/><circle cx="7.500" cy="7.500" r="6.300" fill="none" stroke="#2f78b8" stroke-width=".8"/><rect x="6.500" y="6" width="2" height="6" fill="#fff"/><rect x="6.500" y="3" width="2" height="2" fill="#fff"/></svg>
<div class="t" style="left:121px;top:753px;letter-spacing:-.5px">BUILD FAILED in 0s</div>
<div class="abs" style="left:83px;top:769px;width:1484px;height:7px;overflow:hidden"><svg class="abs" style="left:18px;top:1px" width="15" height="15" viewBox="0 0 15 15"><circle cx="7.500" cy="7.500" r="7" fill="#3d8fd1"/><circle cx="7.500" cy="7.500" r="6.300" fill="none" stroke="#2f78b8" stroke-width=".8"/><rect x="6.500" y="6" width="2" height="6" fill="#fff"/><rect x="6.500" y="3" width="2" height="2" fill="#fff"/></svg><div class="t" style="left:38px;top:2px">1</div></div>
<div class="abs" style="left:1567px;top:750px;width:10px;height:6px;background:#ececec"></div>
<div class="abs" style="left:1568px;top:728px;width:9px;height:23px;background:#bfbfbf"></div>
<div id="bfoot" class="abs"></div><div id="bfoot2" class="abs"></div><div id="bfoot3" class="abs"></div>
<svg class="abs" style="left:0;top:0;pointer-events:none" width="1577" height="781" viewBox="0 0 1577 781" fill="none" stroke="#ff0000" stroke-linecap="round" stroke-linejoin="round">
<path d="M244.600 143.500L243.800 150L242.600 160.300L250 160.500L257 160.600L262 159L266 157.300L270.500 156.800" stroke-width="2"/>
<path d="M248.600 154.600L250.500 151.500L253.500 149.800L255.500 147L258.500 145.800L261 143.200L264 142L266 140.300L269.500 139L273 138.700" stroke-width="2"/>
<path d="M424.600 154.700C417 156.500 414 162 415.300 166C416.500 170.500 420.500 174 429.200 175.800" stroke-width="2"/>
<path d="M424.200 155.200C420.500 158.500 419.500 162 420 165.500C420.300 169 421 171.500 422 173.300" stroke-width="2"/>
<path d="M771.200 267.400C775 267.300 779 268.200 782 269.600C788 272.500 793 275.500 798.900 278.200C805 281 811 284 816.800 287.100C822 290 827 292.500 829.600 294.800C832.500 297.500 833.800 301 834.200 305C835 312 835.500 319 835.300 326.800C835 337 834.500 347 833.500 357.500C832.500 365 830.500 372 828.300 378C826.500 382.500 824.500 386.500 822 390.800C819 396 815.500 400.500 811.700 405C808 409.500 803.500 413.800 798.900 417.700C794 421.500 789 424.500 783.500 426.700C779 428.500 775 433.500 770.700 436.400C768 437.700 765 437.900 762.500 437.700" stroke-width="1.800"/>
</svg>

</body></html>
